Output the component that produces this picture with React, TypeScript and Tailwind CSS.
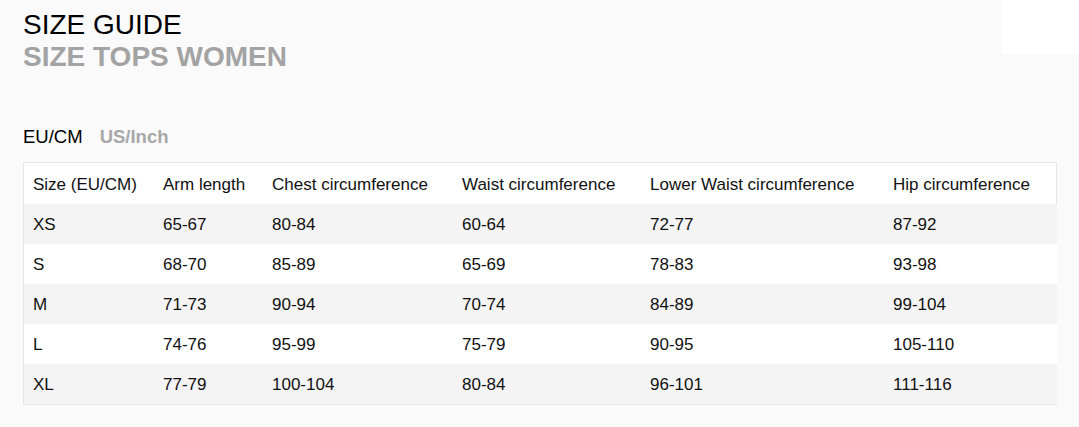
import React from "react";

const rows = [
  ["XS", "65-67", "80-84", "60-64", "72-77", "87-92"],
  ["S", "68-70", "85-89", "65-69", "78-83", "93-98"],
  ["M", "71-73", "90-94", "70-74", "84-89", "99-104"],
  ["L", "74-76", "95-99", "75-79", "90-95", "105-110"],
  ["XL", "77-79", "100-104", "80-84", "96-101", "111-116"],
];

const headers = [
  "Size (EU/CM)",
  "Arm length",
  "Chest circumference",
  "Waist circumference",
  "Lower Waist circumference",
  "Hip circumference",
];

const widths = ["w-[130px]", "w-[109px]", "w-[190px]", "w-[188px]", "w-[243px]", "w-[173px]"];

export default function App() {
  return (
    <div className="relative w-[1079px] h-[427px] bg-[#fafafa] text-black overflow-hidden" style={{ fontFamily: '"Liberation Sans", Arial, sans-serif' }}>
      <div className="absolute right-0 top-0 w-[78px] h-[54px] bg-white" />
      <div className="pl-[23px] pt-[9px]">
        <h1 className="text-[28px] leading-[32px] font-normal text-black">SIZE GUIDE</h1>
        <h2 className="text-[28px] leading-[32px] font-bold text-[#a3a3a3]">SIZE TOPS WOMEN</h2>
        <div className="mt-[52px] flex gap-[17px] text-[18.5px] leading-[24px]">
          <span className="text-black">EU/CM</span>
          <span className="font-bold text-[#a8a8a8]">US/Inch</span>
        </div>
        <div className="mt-[13px] w-[1034px] border border-[#e6e6e6] bg-white">
          <table className="w-full table-fixed border-collapse text-[17px] text-[#111]">
            <thead>
              <tr className="h-[41px]">
                {headers.map((h, i) => (
                  <th key={h} className={`${widths[i]} text-left font-normal pl-[9px] pt-[2px] align-middle`}>{h}</th>
                ))}
              </tr>
            </thead>
            <tbody>
              {rows.map((r, ri) => (
                <tr key={r[0]} className={`h-[40px] ${ri % 2 === 0 ? "bg-[#f4f4f4]" : "bg-white"}`}>
                  {r.map((c, ci) => (
                    <td key={ci} className="pl-[9px] pt-[1px] align-middle">{c}</td>
                  ))}
                </tr>
              ))}
            </tbody>
          </table>
        </div>
      </div>
    </div>
  );
}
